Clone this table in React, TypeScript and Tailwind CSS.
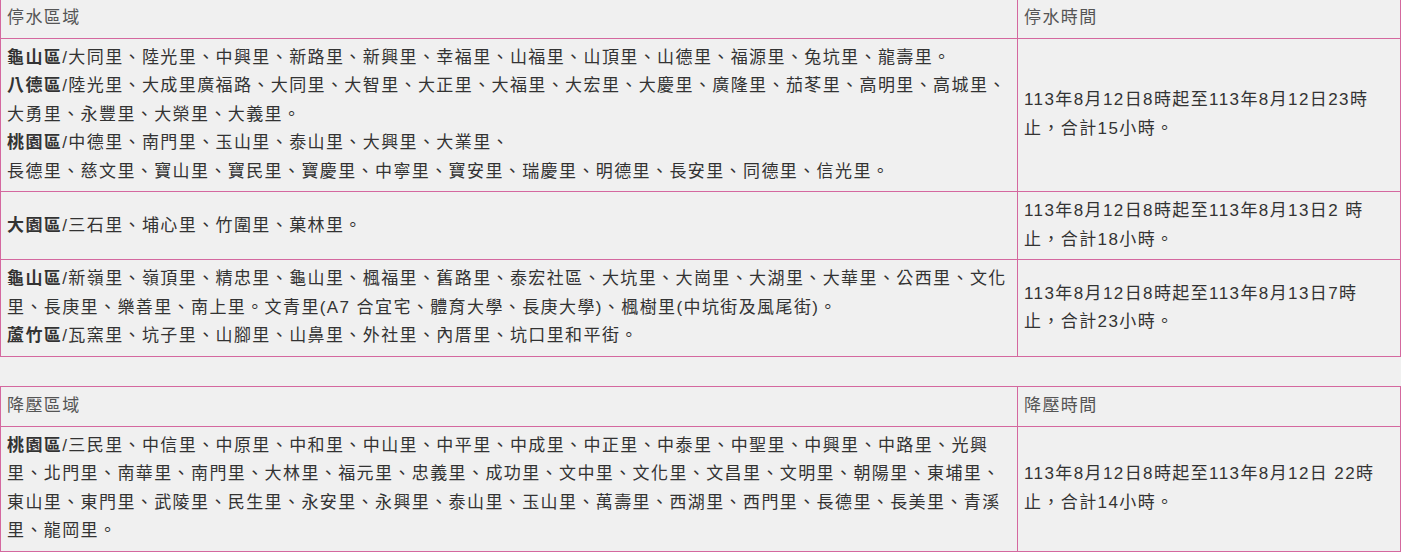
import React from 'react'

type Row = { area: React.ReactNode; time: string }

const waterRows: Row[] = [
  {
    area: (
      <>
        <b>龜山區</b>/大同里、陸光里、中興里、新路里、新興里、幸福里、山福里、山頂里、山德里、福源里、兔坑里、龍壽里。
        <br />
        <b>八德區</b>/陸光里、大成里廣福路、大同里、大智里、大正里、大福里、大宏里、大慶里、廣隆里、茄苳里、高明里、高城里、大勇里、永豐里、大榮里、大義里。
        <br />
        <b>桃園區</b>/中德里、南門里、玉山里、泰山里、大興里、大業里、
        <br />
        長德里、慈文里、寶山里、寶民里、寶慶里、中寧里、寶安里、瑞慶里、明德里、長安里、同德里、信光里。
      </>
    ),
    time: '113年8月12日8時起至113年8月12日23時止，合計15小時。',
  },
  {
    area: (
      <>
        <b>大園區</b>/三石里、埔心里、竹圍里、菓林里。
      </>
    ),
    time: '113年8月12日8時起至113年8月13日2 時止，合計18小時。',
  },
  {
    area: (
      <>
        <b>龜山區</b>/新嶺里、嶺頂里、精忠里、龜山里、楓福里、舊路里、泰宏社區、大坑里、大崗里、大湖里、大華里、公西里、文化里、長庚里、樂善里、南上里。文青里(A7 合宜宅、體育大學、長庚大學)、楓樹里(中坑街及風尾街)。
        <br />
        <b>蘆竹區</b>/瓦窯里、坑子里、山腳里、山鼻里、外社里、內厝里、坑口里和平街。
      </>
    ),
    time: '113年8月12日8時起至113年8月13日7時止，合計23小時。',
  },
]

const pressureRows: Row[] = [
  {
    area: (
      <>
        <b>桃園區</b>/三民里、中信里、中原里、中和里、中山里、中平里、中成里、中正里、中泰里、中聖里、中興里、中路里、光興里、北門里、南華里、南門里、大林里、福元里、忠義里、成功里、文中里、文化里、文昌里、文明里、朝陽里、東埔里、東山里、東門里、武陵里、民生里、永安里、永興里、泰山里、玉山里、萬壽里、西湖里、西門里、長德里、長美里、青溪里、龍岡里。
      </>
    ),
    time: '113年8月12日8時起至113年8月12日 22時止，合計14小時。',
  },
]

function ScheduleTable({ head, rows, className }: { head: [string, string]; rows: Row[]; className?: string }) {
  return (
    <table className={`w-full table-fixed border-collapse ${className ?? ''}`}>
      <colgroup>
        <col className="w-[1017px]" />
        <col />
      </colgroup>
      <thead>
        <tr>
          <th className="border border-[#d4689f] px-1.5 py-[5px] text-left font-normal text-[#555]">{head[0]}</th>
          <th className="border border-[#d4689f] px-1.5 py-[5px] text-left font-normal text-[#555]">{head[1]}</th>
        </tr>
      </thead>
      <tbody>
        {rows.map((r, i) => (
          <tr key={i}>
            <td className="border border-[#d4689f] px-1.5 py-[5px] align-middle">{r.area}</td>
            <td className="border border-[#d4689f] px-1.5 py-[5px] align-middle">{r.time}</td>
          </tr>
        ))}
      </tbody>
    </table>
  )
}

export default function App() {
  return (
    <div
      className="min-h-[552px] overflow-hidden bg-[#f0f0f0] text-[17px] leading-[1.68] tracking-[1.4px] text-[#333]"
      style={{ fontFamily: '"Liberation Sans", "Noto Sans CJK TC", sans-serif' }}
    >
      <ScheduleTable head={['停水區域', '停水時間']} rows={waterRows} className="-mt-[2px]" />
      <ScheduleTable head={['降壓區域', '降壓時間']} rows={pressureRows} className="mt-[29px]" />
    </div>
  )
}
